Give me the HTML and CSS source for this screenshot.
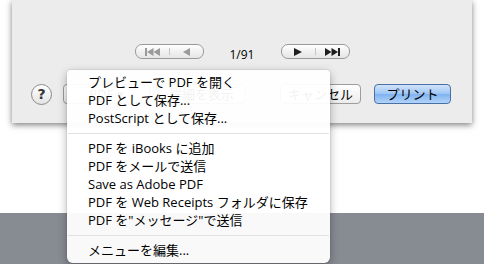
FILE: index.html
```html
<!DOCTYPE html>
<html lang="ja">
<head>
  <meta charset="UTF-8">
  <title>プリント</title>
  <link rel="stylesheet" href="styles.css">
</head>
<body>
  <div class="screen">

    <!-- window area with the print sheet -->
    <div class="desk">
      <div class="sheet">
        <div class="pager">
          <div class="pill">
            <span class="half">
              <svg width="15" height="8" viewBox="0 0 15 8" class="off"><rect x="0" y="0" width="2" height="8"/><polygon points="2,4 8.5,0 8.5,8"/><polygon points="8.5,4 15,0 15,8"/></svg>
            </span>
            <span class="divider"></span>
            <span class="half">
              <svg width="7" height="8" viewBox="0 0 7 8" class="off"><polygon points="0,4 7,0 7,8"/></svg>
            </span>
          </div>
          <span class="page-num">1/91</span>
          <div class="pill">
            <span class="half">
              <svg width="8" height="8" viewBox="0 0 8 8"><polygon points="0,0 8,4 0,8"/></svg>
            </span>
            <span class="divider"></span>
            <span class="half">
              <svg width="15" height="8" viewBox="0 0 15 8"><polygon points="0,0 6.5,4 0,8"/><polygon points="6.5,0 13,4 6.5,8"/><rect x="13" y="0" width="2" height="8"/></svg>
            </span>
          </div>
        </div>

        <div class="actions">
          <button class="help">?</button>
          <button class="btn btn-pdf">PDF ▾</button>
          <button class="btn btn-detail">詳細を表示</button>
          <span class="spacer"></span>
          <button class="btn btn-cancel">キャンセル</button>
          <button class="btn btn-print">プリント</button>
        </div>
      </div>
    </div>

    <div class="dock"></div>

    <!-- PDF popup menu -->
    <ul class="menu">
      <li>プレビューで PDF を開く</li>
      <li>PDF として保存...</li>
      <li>PostScript として保存...</li>
      <li class="sep"></li>
      <li>PDF を iBooks に追加</li>
      <li>PDF をメールで送信</li>
      <li>Save as Adobe PDF</li>
      <li>PDF を Web Receipts フォルダに保存</li>
      <li>PDF を"メッセージ"で送信</li>
      <li class="sep"></li>
      <li>メニューを編集...</li>
    </ul>
  </div>
</body>
</html>
```

FILE: styles.css
```css
* {
  margin: 0;
  padding: 0;
  box-sizing: border-box;
}

html, body {
  width: 484px;
  height: 264px;
  overflow: hidden;
  background: #fff;
  font-family: "Open Sans", "Noto Sans CJK JP", sans-serif;
  color: #000;
}

.screen {
  position: relative;
  width: 484px;
  height: 264px;
}

.desk {
  height: 213px;
  background: #fff;
}

.dock {
  height: 51px;
  background: #878b92;
}

.sheet {
  margin: 0 12px;
  height: 123px;
  background: #ececec;
  box-shadow: 0 2px 6px rgba(0, 0, 0, 0.5);
  padding-top: 44px;
}

/* page controls */
.pager {
  display: flex;
  justify-content: center;
  align-items: flex-start;
  gap: 26px;
  height: 15px;
}

.pill {
  width: 69px;
  height: 15px;
  display: flex;
  align-items: center;
  border: 1px solid #9a9a9a;
  border-radius: 7px;
  background: linear-gradient(#ffffff, #f1f1f1 50%, #e6e6e6);
}

.half {
  flex: 1;
  display: flex;
  justify-content: center;
  align-items: center;
}

.half svg {
  fill: #1e1e1e;
}

.half svg.off {
  fill: #9a9a9a;
}

.divider {
  width: 1px;
  height: 7px;
  background: #c4c4c4;
}

.page-num {
  font-size: 12px;
  line-height: 15px;
  margin-top: 3px;
  width: 25px;
  text-align: center;
}

/* bottom buttons */
.actions {
  display: flex;
  align-items: flex-start;
  margin-top: 25px;
  padding: 0 21px 0 19px;
}

.help {
  width: 21px;
  height: 21px;
  border-radius: 50%;
  border: 1px solid #8a8a8a;
  background: linear-gradient(#ffffff, #e4e4e4);
  font-family: "DejaVu Sans", sans-serif;
  font-weight: bold;
  font-size: 14px;
  color: #333;
  line-height: 19px;
  text-align: center;
  margin-right: 11px;
}

.btn {
  height: 20px;
  border: 1px solid #9d9d9d;
  border-radius: 4px;
  background: linear-gradient(#ffffff, #f6f6f6 50%, #ececec);
  font-family: "Open Sans", "Noto Sans CJK JP", sans-serif;
  font-size: 13px;
  line-height: 18px;
  color: #000;
  text-align: center;
}

.btn-pdf {
  width: 87px;
  margin-right: 8px;
}

.btn-detail {
  width: 87px;
}

.spacer {
  flex: 1;
}

.btn-cancel {
  width: 81px;
  margin-right: 13px;
}

.btn-print {
  width: 77px;
  border-color: #4a70a8;
  background: linear-gradient(#d2e4fb, #9cc4f4 50%, #7fb2f0 51%, #b2d4fa);
}

/* popup menu */
.menu {
  position: absolute;
  left: 67px;
  top: 70px;
  width: 263px;
  list-style: none;
  padding: 3px 0 4px;
  background: rgba(255, 255, 255, 0.95);
  border-radius: 4px 4px 6px 6px;
  box-shadow: 0 3px 10px rgba(0, 0, 0, 0.3), 0 0 0 1px rgba(0, 0, 0, 0.05);
}

.menu li {
  height: 18px;
  line-height: 18px;
  padding-left: 21px;
  font-size: 13px;
  white-space: nowrap;
}

.menu li.sep {
  height: 1px;
  margin: 6px 1px 5px;
  padding: 0;
  background: #e2e2e2;
}
```
